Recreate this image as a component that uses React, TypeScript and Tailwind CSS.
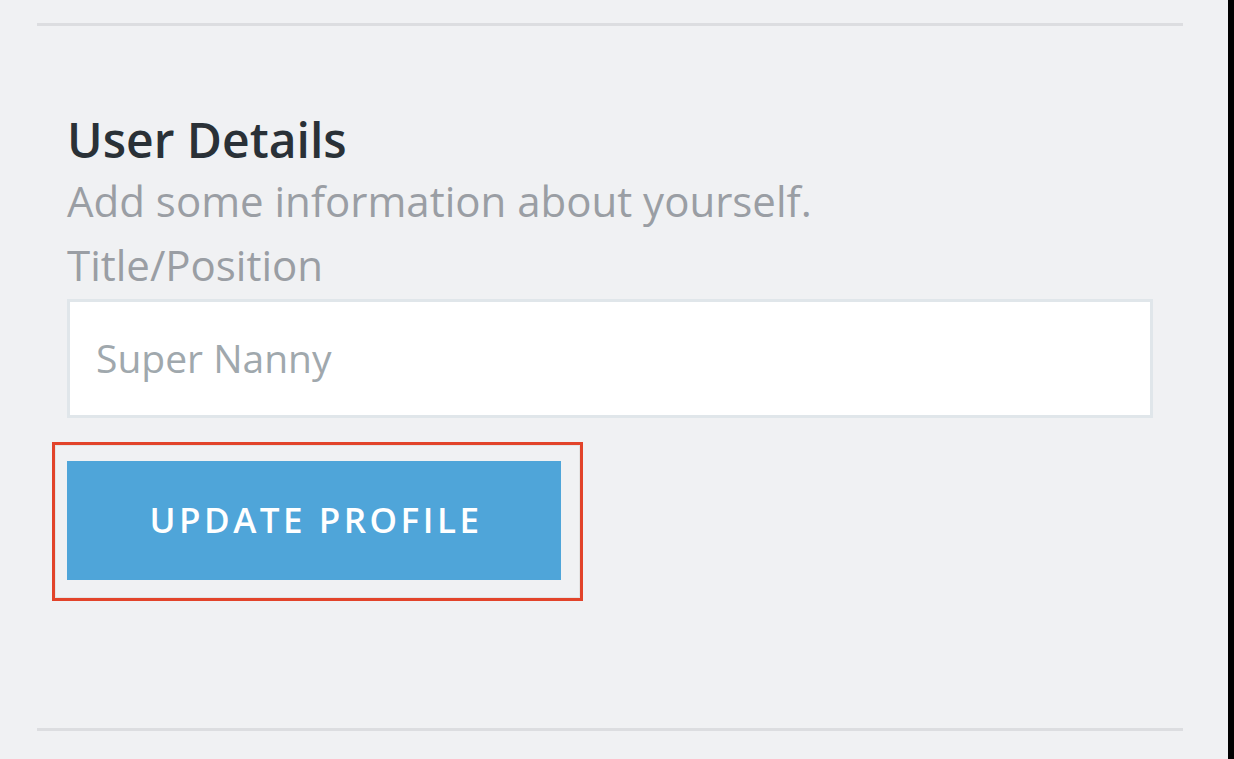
import React from "react";

export default function App() {
  return (
    <div className="flex h-[759px] w-[1234px] overflow-hidden bg-[#f0f1f3] font-['Open_Sans',sans-serif]">
      <div className="flex w-[1228px] flex-col px-[37px] pt-[23px]">
        <div className="h-[3px] w-[1146px] bg-[#dcdde0]" />
        <div className="flex flex-col pl-[30px] pt-[85px]">
          <h2 className="text-[48px] font-semibold leading-[58px] text-[#2a3137]">User Details</h2>
          <p className="text-[42px] leading-[64px] text-[#9a9ea4]">Add some information about yourself.</p>
          <label className="text-[42px] leading-[64px] text-[#9a9ea4]">Title/Position</label>
          <div className="mt-[2px] flex h-[119px] w-[1086px] items-center border-[3px] border-[#e0e6ea] bg-white pl-[26px]">
            <span className="text-[39px] text-[#a0a8ad]">Super Nanny</span>
          </div>
          <div className="ml-[-15px] mt-[24px] w-[531px] border-[3px] border-[#e2432a]">
            <div className="border border-[#e4e4e4] pb-[17px] pl-[11px] pt-[15px]">
              <button className="flex h-[119px] w-[494px] items-center justify-center bg-[#4fa5d9] pl-[4px] text-[35px] font-semibold tracking-[3.5px] text-white">
                UPDATE PROFILE
              </button>
            </div>
          </div>
        </div>
        <div className="flex-1" />
        <div className="mb-[28px] h-[3px] w-[1146px] bg-[#dcdde0]" />
      </div>
      <div className="w-[6px] bg-black" />
    </div>
  );
}
